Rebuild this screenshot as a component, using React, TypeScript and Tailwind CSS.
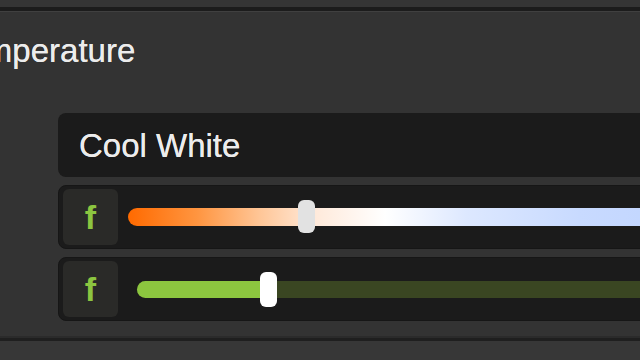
import React from 'react';

const font = "font-['Liberation_Sans',Arial,sans-serif]";

const FButton = () => (
  <div className="w-[55px] h-[56px] shrink-0 rounded-[6px] bg-[#2a2a28] flex items-center justify-center text-[#8cc540] text-[34px] leading-none font-bold">
    f
  </div>
);

const App = () => {
  return (
    <div className={`w-[640px] h-[360px] overflow-hidden bg-[#333333] flex flex-col ${font}`}>
      <div className="h-[7px] shrink-0 bg-[#353535]" />
      <div className="h-[4px] shrink-0 bg-[#1c1c1c]" />
      <div className="h-[1px] shrink-0 bg-[#404040]" />
      <div className="flex-1 flex flex-col bg-[#333333] overflow-hidden">
        <h2 className="mt-[22px] -ml-[50px] text-[33px] leading-[33px] text-[#ececec] whitespace-nowrap [text-shadow:0_0_0.4px_#ececec]">
          Temperature
        </h2>
        <div className="mt-[46px] pl-[58px] flex flex-col gap-2 w-[760px]">
          <div className="h-[64px] rounded-[8px] bg-[#1b1b1b] flex items-center pl-[21px] text-[33px] leading-[33px] text-[#ececec] [text-shadow:0_0_0.4px_#ececec]">
            Cool White
          </div>
          <div className="h-[64px] rounded-[8px] bg-[#1b1b1b] flex items-center p-1 border border-[#161616]">
            <FButton />
            <div className="relative ml-[10px] flex-1 h-[18px] rounded-l-full bg-[linear-gradient(to_right,#ff6a00_0%,#ff9540_11%,#ffc697_21%,#ffeadb_30%,#ffffff_41%,#dde8ff_54%,#c8daff_72%,#bcd2ff_100%)]">
              <div className="absolute left-[170px] -top-[8px] w-[17px] h-[33px] rounded-[6px] bg-[#e2e2e2]" />
            </div>
          </div>
          <div className="h-[64px] rounded-[8px] bg-[#1b1b1b] flex items-center p-1 border border-[#161616]">
            <FButton />
            <div className="relative ml-[19px] flex-1 h-[17px] rounded-l-full bg-[#3a4622] flex">
              <div className="w-[131px] h-full rounded-l-full bg-[#8cc63f]" />
              <div className="absolute left-[123px] -top-[9px] w-[17px] h-[35px] rounded-[6px] bg-white" />
            </div>
          </div>
        </div>
      </div>
      <div className="h-[2px] shrink-0 bg-[#2b2b2b]" />
      <div className="h-[3px] shrink-0 bg-[#1f1f1f]" />
      <div className="h-[19px] shrink-0 bg-[#373737]" />
    </div>
  );
};

export default App;
